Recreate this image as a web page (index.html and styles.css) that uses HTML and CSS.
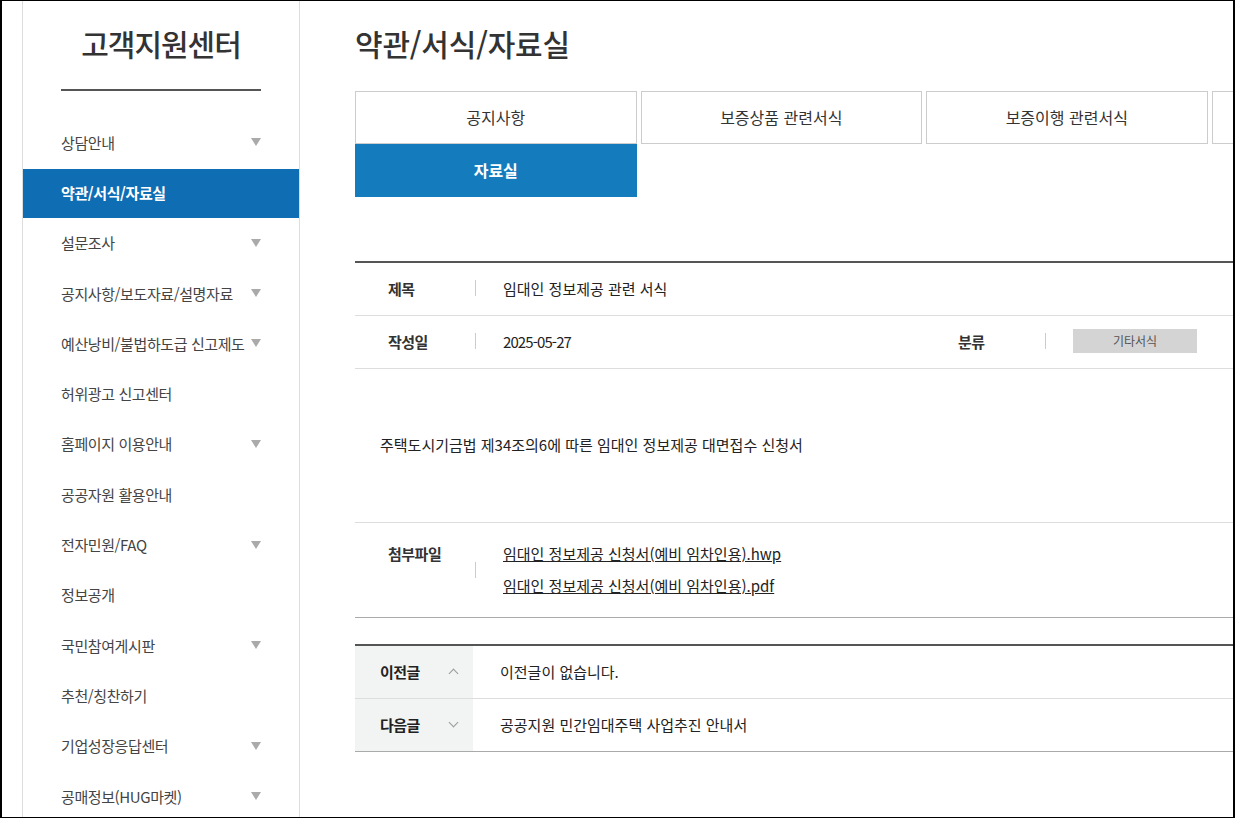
FILE: index.html
```html
<!DOCTYPE html>
<html lang="ko">

<head>
  <title>약관/서식/자료실 - 고객지원센터</title>
  <meta charset="utf-8">
  <link rel="stylesheet" href="styles.css">
</head>

<body>
  <div class="page">
    <div class="lnb">
      <h1 class="lnb-title">고객지원센터</h1>
      <ul class="lnb-menu">
        <li class="has-sub">상담안내</li>
        <li class="on">약관/서식/자료실</li>
        <li class="has-sub">설문조사</li>
        <li class="has-sub">공지사항/보도자료/설명자료</li>
        <li class="has-sub">예산낭비/불법하도급 신고제도</li>
        <li>허위광고 신고센터</li>
        <li class="has-sub">홈페이지 이용안내</li>
        <li>공공자원 활용안내</li>
        <li class="has-sub">전자민원/FAQ</li>
        <li>정보공개</li>
        <li class="has-sub">국민참여게시판</li>
        <li>추천/칭찬하기</li>
        <li class="has-sub">기업성장응답센터</li>
        <li class="has-sub">공매정보(HUG마켓)</li>
      </ul>
    </div>

    <div class="content">
      <h2 class="page-title">약관/서식/자료실</h2>

      <ul class="tabs">
        <li>공지사항</li>
        <li>보증상품 관련서식</li>
        <li>보증이행 관련서식</li>
        <li>기타 관련서식</li>
        <li class="on">자료실</li>
      </ul>

      <div class="view">
        <div class="view-row">
          <div class="view-cell">
            <span class="label">제목</span>
            <span class="value">임대인 정보제공 관련 서식</span>
          </div>
        </div>
        <div class="view-row">
          <div class="view-cell half">
            <span class="label">작성일</span>
            <span class="value date">2025-05-27</span>
          </div>
          <div class="view-cell half">
            <span class="label">분류</span>
            <span class="value"><span class="category">기타서식</span></span>
          </div>
        </div>
        <div class="view-body">
          주택도시기금법 제34조의6에 따른 임대인 정보제공 대면접수 신청서
        </div>
        <div class="view-row files">
          <div class="view-cell">
            <span class="label">첨부파일</span>
            <span class="value">
              <a href="#">임대인 정보제공 신청서(예비 임차인용).hwp</a>
              <a href="#">임대인 정보제공 신청서(예비 임차인용).pdf</a>
            </span>
          </div>
        </div>
      </div>

      <div class="prev-next">
        <div class="pn-row">
          <div class="pn-label prev">이전글</div>
          <div class="pn-text">이전글이 없습니다.</div>
        </div>
        <div class="pn-row">
          <div class="pn-label next">다음글</div>
          <div class="pn-text">공공지원 민간임대주택 사업추진 안내서</div>
        </div>
      </div>
    </div>
  </div>
</body>

</html>
```

FILE: styles.css
```css
html,
body {
  margin: 0;
  padding: 0;
}

body {
  font-family: "Noto Sans CJK KR", "Noto Sans", sans-serif;
  color: #333;
  background: #fff;
}

ul {
  list-style: none;
  margin: 0;
  padding: 0;
}

.page {
  display: flex;
  height: 818px;
  box-sizing: border-box;
  border: 1px solid #000;
  border-left-width: 2px;
  border-right-width: 2px;
  overflow: hidden;
}

/* left menu */
.lnb {
  flex: 0 0 276px;
  margin-left: 20px;
  border-left: 1px solid #ddd;
  border-right: 1px solid #ddd;
}

.lnb-title {
  margin: 0 38px;
  padding: 20px 0 24px;
  border-bottom: 2px solid #555;
  text-align: center;
  font-size: 30px;
  font-weight: 500;
  line-height: 44px;
  letter-spacing: -1px;
  color: #333;
}

.lnb-menu {
  margin-top: 28px;
}

.lnb-menu li {
  display: flex;
  align-items: center;
  justify-content: space-between;
  height: 48.3px;
  margin-top: 2px;
  padding: 0 38px 2px;
  box-sizing: border-box;
  font-size: 15px;
  letter-spacing: -0.4px;
  color: #444;
  white-space: nowrap;
}

.lnb-menu li.has-sub::after {
  content: "";
  border-top: 8px solid #aaa;
  border-left: 5px solid transparent;
  border-right: 5px solid transparent;
}

.lnb-menu li.on {
  background: #0f6db4;
  color: #fff;
  font-weight: 700;
}

/* content */
.content {
  flex: 0 0 1140px;
  margin-left: 55px;
}

.page-title {
  margin: 0;
  padding-top: 20px;
  font-size: 30px;
  font-weight: 500;
  line-height: 44px;
  letter-spacing: -0.2px;
  color: #333;
}

.tabs {
  display: grid;
  grid-template-columns: repeat(4, 1fr);
  column-gap: 4px;
  width: 1138px;
  margin-top: 26px;
}

.tabs li {
  height: 53px;
  box-sizing: border-box;
  border: 1px solid #ccc;
  display: flex;
  align-items: center;
  justify-content: center;
  padding-bottom: 1px;
  font-size: 16px;
  color: #333;
}

.tabs li.on {
  border-color: #147cbd;
  background: #147cbd;
  color: #fff;
  font-weight: 700;
}

.view {
  margin-top: 64px;
  border-top: 2px solid #555;
  border-bottom: 1px solid #aaa;
}

.view-row {
  display: flex;
  border-bottom: 1px solid #ddd;
}

.view-row.files {
  border-bottom: none;
}

.view-cell {
  display: flex;
  align-items: center;
  flex: 1;
  height: 52px;
  padding-bottom: 2px;
  box-sizing: border-box;
  font-size: 15px;
}

.view-cell.half {
  flex: 0 0 50%;
}

.view-cell .label {
  position: relative;
  flex: 0 0 121px;
  box-sizing: border-box;
  padding-left: 33px;
  font-weight: 700;
  letter-spacing: -0.5px;
  color: #333;
}

.view-cell .label::after {
  content: "";
  position: absolute;
  right: 0;
  top: 50%;
  height: 16px;
  margin-top: -8px;
  border-right: 1px solid #ccc;
}

.view-cell .value {
  padding-left: 27px;
  color: #222;
}

.view-cell .date {
  letter-spacing: -0.9px;
}

.category {
  display: inline-block;
  width: 124px;
  height: 24px;
  line-height: 24px;
  background: #d4d4d4;
  text-align: center;
  font-size: 12px;
  color: #555;
}

.view-body {
  padding: 65px 25px 66px;
  border-bottom: 1px solid #ddd;
  font-size: 15px;
  line-height: 22px;
  color: #222;
}

.files .view-cell {
  align-items: stretch;
  height: auto;
  padding: 15px 0;
}

.files .label {
  line-height: 32px;
}

.files .value a {
  display: block;
  line-height: 32px;
  color: #222;
  text-decoration: underline;
}

.prev-next {
  margin-top: 26px;
  border-top: 2px solid #555;
  border-bottom: 1px solid #aaa;
}

.pn-row {
  display: flex;
  align-items: stretch;
  height: 52px;
}

.pn-row + .pn-row {
  border-top: 1px solid #ddd;
}

.pn-label {
  display: flex;
  align-items: center;
  justify-content: space-between;
  flex: 0 0 118px;
  box-sizing: border-box;
  padding: 0 16px 2px 25px;
  background: #f2f4f4;
  font-size: 15px;
  font-weight: 700;
  letter-spacing: -0.5px;
  color: #222;
}

.pn-label::after {
  content: "";
  width: 6px;
  height: 6px;
  border-left: 1px solid #999;
  border-top: 1px solid #999;
}

.pn-label.prev::after {
  transform: translateY(2px) rotate(45deg);
}

.pn-label.next::after {
  transform: translateY(-2px) rotate(225deg);
}

.pn-text {
  display: flex;
  align-items: center;
  padding-left: 27px;
  padding-bottom: 2px;
  font-size: 15px;
  color: #222;
}
```
